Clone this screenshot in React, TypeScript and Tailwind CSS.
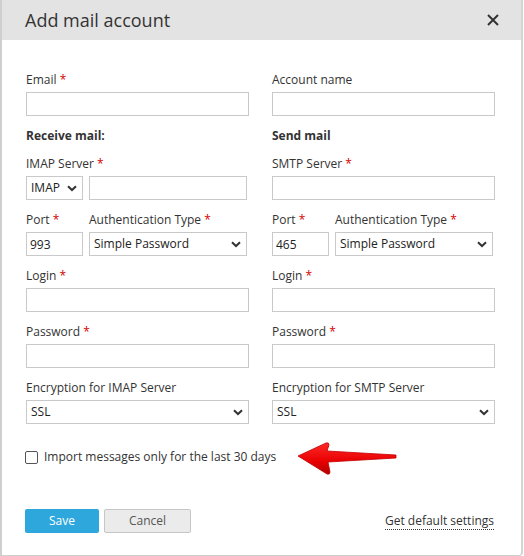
import React from "react";

const Req = () => <span className="text-[#d40000]"> *</span>;

function Label({ text, req }: { text: string; req?: boolean }) {
  return (
    <div className="h-[18px] leading-[20px] text-[12px] text-[#333] mb-[4px]">
      {text}
      {req && <Req />}
    </div>
  );
}

function TextInput({ value, className = "" }: { value?: string; className?: string }) {
  return (
    <input
      defaultValue={value}
      className={`block h-[24px] border border-[#c9c9c9] bg-white px-[3px] text-[12px] text-[#222] outline-none ${className}`}
    />
  );
}

function Chevron() {
  return (
    <svg width="10" height="7" viewBox="0 0 10 7" className="pointer-events-none absolute right-[6px] top-[9px]">
      <path d="M1 1.2 L5 5 L9 1.2" fill="none" stroke="#333" strokeWidth="2" />
    </svg>
  );
}

function Select({ value, className = "", pad = "pl-[4px]" }: { value: string; className?: string; pad?: string }) {
  return (
    <div className={`relative h-[24px] ${className}`}>
      <select
        defaultValue={value}
        className={`block h-full w-full appearance-none border border-[#c9c9c9] bg-white ${pad} text-[12px] text-[#222] outline-none`}
      >
        <option>{value}</option>
      </select>
      <Chevron />
    </div>
  );
}

function Column({ side }: { side: "imap" | "smtp" }) {
  const imap = side === "imap";
  return (
    <div className="flex flex-col w-[223px]">
      <Label text={imap ? "Email" : "Account name"} req={imap} />
      <TextInput className="w-full" />
      <div className="mt-[10px] h-[18px] leading-[20px] text-[12px] font-bold text-[#333]">
        {imap ? "Receive mail:" : "Send mail"}
      </div>
      <div className="mt-[10px]">
        <Label text={imap ? "IMAP Server" : "SMTP Server"} req />
        {imap ? (
          <div className="flex gap-[6px]">
            <Select value="IMAP" className="w-[57px]" />
            <TextInput className="w-[158px]" />
          </div>
        ) : (
          <TextInput className="w-full" />
        )}
      </div>
      <div className="mt-[10px] flex gap-[6px]">
        <div className="w-[57px]">
          <Label text="Port" req />
          <TextInput value={imap ? "993" : "465"} className="w-full" />
        </div>
        <div className="w-[158px]">
          <Label text="Authentication Type" req />
          <Select value="Simple Password" className="w-full" />
        </div>
      </div>
      <div className="mt-[10px]">
        <Label text="Login" req />
        <TextInput className="w-full" />
      </div>
      <div className="mt-[10px]">
        <Label text="Password" req />
        <TextInput className="w-full" />
      </div>
      <div className="mt-[10px]">
        <Label text={imap ? "Encryption for IMAP Server" : "Encryption for SMTP Server"} />
        <Select value="SSL" className="w-full" />
      </div>
    </div>
  );
}

export default function App() {
  return (
    <div
      className="w-[524px] h-[556px] bg-white"
      style={{ fontFamily: '"Open Sans", "Noto Sans", sans-serif' }}
    >
      <div className="relative flex h-full w-[523px] flex-col overflow-hidden rounded-br-[4px] border-x-2 border-b border-[#cfcfcf] border-r-[#d4d4d4]">
        {/* Header */}
        <div className="flex h-[40px] items-center justify-between bg-[#e3e3e3] pl-[23px] pr-[22px]">
          <h1 className="text-[18px] text-[#333] leading-none">Add mail account</h1>
          <svg width="12" height="12" viewBox="0 0 12 12">
            <path d="M1 1 L11 11 M11 1 L1 11" stroke="#333" strokeWidth="2" />
          </svg>
        </div>

        {/* Form */}
        <div className="flex gap-[23px] pl-[24px] pt-[30px]">
          <Column side="imap" />
          <Column side="smtp" />
        </div>

        {/* Checkbox */}
        <label className="mt-[24px] ml-[23px] flex items-center gap-[6px] text-[12px] leading-[18px] text-[#333]">
          <span className="h-[13px] w-[13px] rounded-[2px] border border-[#555] bg-white" />
          Import messages only for the last 30 days
        </label>

        {/* Footer */}
        <div className="mt-[43px] flex items-center pl-[23px] pr-[27px]">
          <button className="h-[24px] w-[74px] rounded-[2px] bg-[#2ea7dd] text-[12px] text-white">Save</button>
          <button className="ml-[5px] h-[24px] w-[87px] rounded-[2px] border border-[#c6c6c6] bg-[#ebebeb] text-[12px] text-[#555]">
            Cancel
          </button>
          <span className="ml-auto border-b border-dotted border-[#333] text-[12px] leading-[17px] text-[#333]">
            Get default settings
          </span>
        </div>

        {/* Red arrow annotation */}
        <svg width="104" height="36" viewBox="0 0 104 36" className="absolute left-[294px] top-[441px]">
          <defs>
            <linearGradient id="ar" x1="0" y1="0" x2="0" y2="1">
              <stop offset="0" stopColor="#ff2a2a" />
              <stop offset="0.6" stopColor="#e80000" />
              <stop offset="1" stopColor="#b00000" />
            </linearGradient>
          </defs>
          <path
            d="M2 15 L30 2 Q33 1 33 4 L31 10 L100 14 L100 17 L32 21 L34 31 Q34 34 31 33 Z"
            fill="url(#ar)"
            stroke="#c00000"
            strokeWidth="0.8"
            strokeLinejoin="round"
          />
        </svg>
      </div>
    </div>
  );
}
